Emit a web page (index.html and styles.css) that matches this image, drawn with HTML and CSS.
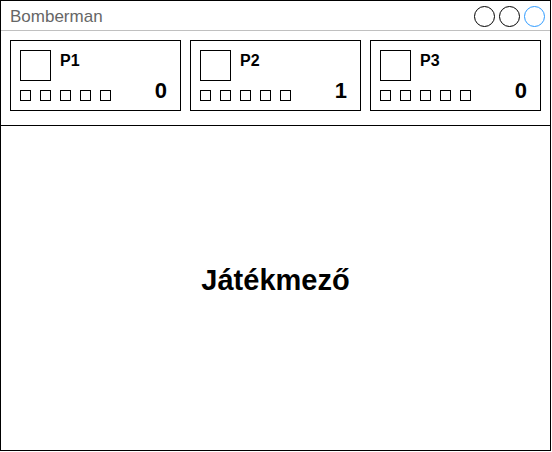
FILE: index.html
```html
<!DOCTYPE html>
<html>
<head>
<meta charset="utf-8">
<link rel="stylesheet" href="styles.css">
</head>
<body>
<div class="window">
  <div class="titlebar">
    <span class="title">Bomberman</span>
    <div class="controls">
      <span class="circle"></span>
      <span class="circle"></span>
      <span class="circle blue"></span>
    </div>
  </div>
  <div class="players">
    <div class="panel">
      <div class="top">
        <div class="avatar"></div>
        <div class="name">P1</div>
      </div>
      <div class="bottom">
        <div class="items"><span class="item"></span><span class="item"></span><span class="item"></span><span class="item"></span><span class="item"></span></div>
        <div class="score">0</div>
      </div>
    </div>
    <div class="panel">
      <div class="top">
        <div class="avatar"></div>
        <div class="name">P2</div>
      </div>
      <div class="bottom">
        <div class="items"><span class="item"></span><span class="item"></span><span class="item"></span><span class="item"></span><span class="item"></span></div>
        <div class="score">1</div>
      </div>
    </div>
    <div class="panel">
      <div class="top">
        <div class="avatar"></div>
        <div class="name">P3</div>
      </div>
      <div class="bottom">
        <div class="items"><span class="item"></span><span class="item"></span><span class="item"></span><span class="item"></span><span class="item"></span></div>
        <div class="score">0</div>
      </div>
    </div>
  </div>
  <div class="field">Játékmező</div>
</div>
</body>
</html>
```

FILE: styles.css
```css
* { box-sizing: border-box; }
body {
  margin: 0;
  background: #fff;
  font-family: "Liberation Sans", Arial, sans-serif;
}
.window {
  width: 551px;
  height: 451px;
  border: 1px solid #000;
  display: flex;
  flex-direction: column;
}
.titlebar {
  height: 30px;
  flex: none;
  border-bottom: 1px solid #c0c0c0;
  display: flex;
  align-items: center;
  justify-content: space-between;
  padding: 0 5px 0 9px;
}
.title {
  color: #666;
  font-size: 17px;
  padding-top: 3px;
}
.controls {
  display: flex;
  gap: 4px;
  padding-top: 1px;
}
.circle {
  width: 21px;
  height: 21px;
  border: 1px solid #000;
  border-radius: 50%;
}
.circle.blue { border-color: #2e9bff; }
.players {
  flex: none;
  height: 95px;
  border-bottom: 1px solid #000;
  display: flex;
  gap: 9px;
  padding: 9px 9px 0 9px;
}
.panel {
  width: 171px;
  height: 71px;
  border: 1px solid #000;
  padding: 9px 0 0 9px;
}
.top {
  display: flex;
  gap: 9px;
}
.avatar {
  width: 31px;
  height: 31px;
  border: 1px solid #000;
}
.name {
  font-weight: bold;
  font-size: 16px;
  line-height: 16px;
  margin-top: 3px;
}
.bottom {
  display: flex;
  justify-content: space-between;
  align-items: flex-end;
  padding-right: 13px;
  margin-top: -1px;
}
.items {
  display: flex;
  gap: 9px;
  margin-top: 10px;
}
.item {
  width: 11px;
  height: 11px;
  border: 1px solid #000;
}
.score {
  font-weight: bold;
  font-size: 22px;
  line-height: 22px;
  margin-bottom: -1px;
}
.field {
  flex: 1;
  display: flex;
  align-items: center;
  justify-content: center;
  font-weight: bold;
  font-size: 29px;
  padding-bottom: 15px;
}
```
